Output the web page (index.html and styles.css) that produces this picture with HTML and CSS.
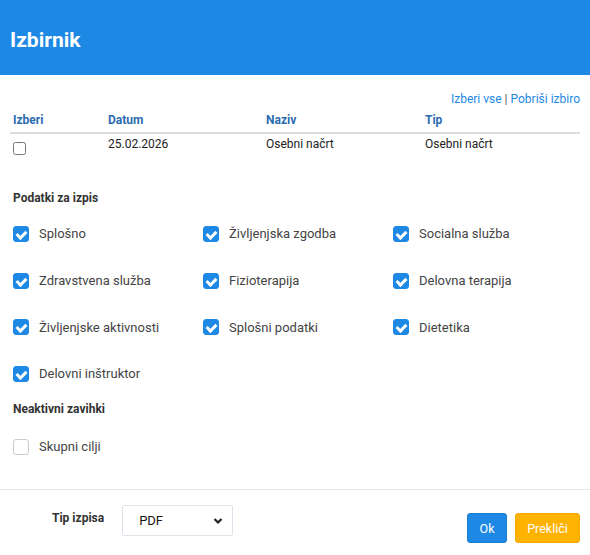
FILE: index.html
```html
<!DOCTYPE html>
<html lang="sl">
<head>
    <meta charset="UTF-8">
    <meta name="viewport" content="width=device-width, initial-scale=1.0">
    <title>Izbirnik</title>
    <link rel="stylesheet" href="styles.css">
</head>
<body>
    <div class="dialog">
        <div class="dialog-header">
            <h1>Izbirnik</h1>
        </div>

        <div class="dialog-body">
            <div class="links">
                <a href="#">Izberi vse</a> | <a href="#">Pobriši izbiro</a>
            </div>

            <table class="izbor">
                <thead>
                    <tr>
                        <th class="col-izberi">Izberi</th>
                        <th class="col-datum">Datum</th>
                        <th class="col-naziv">Naziv</th>
                        <th>Tip</th>
                    </tr>
                </thead>
                <tbody>
                    <tr>
                        <td><input type="checkbox" class="native"></td>
                        <td>25.02.2026</td>
                        <td>Osebni načrt</td>
                        <td>Osebni načrt</td>
                    </tr>
                </tbody>
            </table>

            <h2>Podatki za izpis</h2>
            <div class="check-grid">
                <label class="check"><span class="box on"></span>Splošno</label>
                <label class="check"><span class="box on"></span>Življenjska zgodba</label>
                <label class="check"><span class="box on"></span>Socialna služba</label>
                <label class="check"><span class="box on"></span>Zdravstvena služba</label>
                <label class="check"><span class="box on"></span>Fizioterapija</label>
                <label class="check"><span class="box on"></span>Delovna terapija</label>
                <label class="check"><span class="box on"></span>Življenjske aktivnosti</label>
                <label class="check"><span class="box on"></span>Splošni podatki</label>
                <label class="check"><span class="box on"></span>Dietetika</label>
                <label class="check"><span class="box on"></span>Delovni inštruktor</label>
            </div>

            <h2 class="neaktivni">Neaktivni zavihki</h2>
            <div class="check-grid inactive">
                <label class="check"><span class="box"></span>Skupni cilji</label>
            </div>
        </div>

        <div class="dialog-footer">
            <div class="tip-izpisa">
                <label for="tip">Tip izpisa</label>
                <div class="select">
                    <span>PDF</span>
                    <svg width="10" height="8" viewBox="0 0 10 8"><path d="M1.5 2 L5 5.5 L8.5 2" fill="none" stroke="#222" stroke-width="2.2"/></svg>
                </div>
            </div>
            <div class="buttons">
                <button class="btn btn-ok">Ok</button>
                <button class="btn btn-cancel">Prekliči</button>
            </div>
        </div>
    </div>
</body>
</html>
```

FILE: styles.css
```css
:root {
    --blue: #1e88e5;
    --head-blue: #2b6cb0;
    --orange: #ffb300;
    --text: #222222;
    --label: #444444;
    --line: #dddddd;
}

* {
    box-sizing: border-box;
}

body {
    margin: 0;
    font-family: Roboto, 'Liberation Sans', Arial, sans-serif;
    font-size: 13px;
    color: var(--text);
    background: #ffffff;
}

.dialog {
    width: 590px;
    height: 555px;
    display: flex;
    flex-direction: column;
}

.dialog-header {
    height: 75px;
    background: var(--blue);
    padding: 27px 10px 0;
}

.dialog-header h1 {
    margin: 0;
    color: #ffffff;
    font-size: 21px;
    font-weight: 700;
    line-height: 26px;
}

.dialog-body {
    padding: 15px 10px 0;
    flex: 1;
}

.links {
    text-align: right;
    font-size: 12px;
    line-height: 18px;
    color: #555555;
}

.links a {
    color: var(--blue);
    text-decoration: none;
}

.izbor {
    width: 100%;
    border-collapse: collapse;
    margin-top: 1px;
}

.izbor th {
    text-align: left;
    color: var(--head-blue);
    font-size: 12px;
    font-weight: 700;
    padding: 3px 3px 4px;
    line-height: 16px;
    border-bottom: 2px solid var(--line);
}

.izbor td {
    font-size: 12px;
    padding: 2px 3px 0;
    line-height: 17px;
    vertical-align: top;
}

.col-izberi { width: 95px; }
.col-datum { width: 158px; }
.col-naziv { width: 159px; }

input.native {
    margin: 6px 0 0;
    width: 13px;
    height: 13px;
}

h2 {
    margin: 30px 0 0 3px;
    font-size: 12px;
    font-weight: 700;
    color: #333333;
    line-height: 16px;
}

h2.neaktivni {
    margin-top: 4px;
}

.check-grid {
    display: grid;
    grid-template-columns: 190px 190px 190px;
    grid-auto-rows: 46.7px;
    padding-left: 3px;
    margin-top: 4px;
}

.check-grid.inactive {
    margin-top: 6px;
}

.check {
    display: flex;
    align-items: center;
    padding-top: 1px;
    color: var(--label);
    font-size: 13px;
}

.box {
    width: 16px;
    height: 16px;
    border-radius: 3px;
    border: 1px solid #cccccc;
    margin-right: 10px;
    position: relative;
    flex-shrink: 0;
}

.box.on {
    background: var(--blue);
    border-color: var(--blue);
}

/* kljukica */
.box.on::after {
    content: '';
    position: absolute;
    left: 4px;
    top: 2px;
    width: 4px;
    height: 7px;
    border: solid #ffffff;
    border-width: 0 3px 3px 0;
    transform: rotate(45deg);
}

.dialog-footer {
    border-top: 1px solid #e6e6e6;
    height: 66px;
    display: flex;
    justify-content: space-between;
    padding: 15px 10px 0 52px;
}

.tip-izpisa {
    display: flex;
    align-items: flex-start;
    gap: 18px;
}

.tip-izpisa label {
    font-size: 12px;
    font-weight: 700;
    color: #333333;
    padding-top: 6px;
}

.select {
    width: 111px;
    height: 31px;
    border: 1px solid #dde3ea;
    border-radius: 2px;
    display: flex;
    align-items: center;
    justify-content: space-between;
    padding: 0 9px 0 16px;
    font-size: 13px;
    color: #111111;
}

.buttons {
    display: flex;
    gap: 8px;
    padding-top: 8px;
}

.btn {
    height: 30px;
    border-radius: 3px;
    font-family: inherit;
    font-size: 12.5px;
    color: #ffffff;
    cursor: pointer;
}

.btn-ok {
    width: 40px;
    background: var(--blue);
    border: 1px solid #1b7fd6;
}

.btn-cancel {
    width: 65px;
    background: var(--orange);
    border: 1px solid #f5a800;
}
```
